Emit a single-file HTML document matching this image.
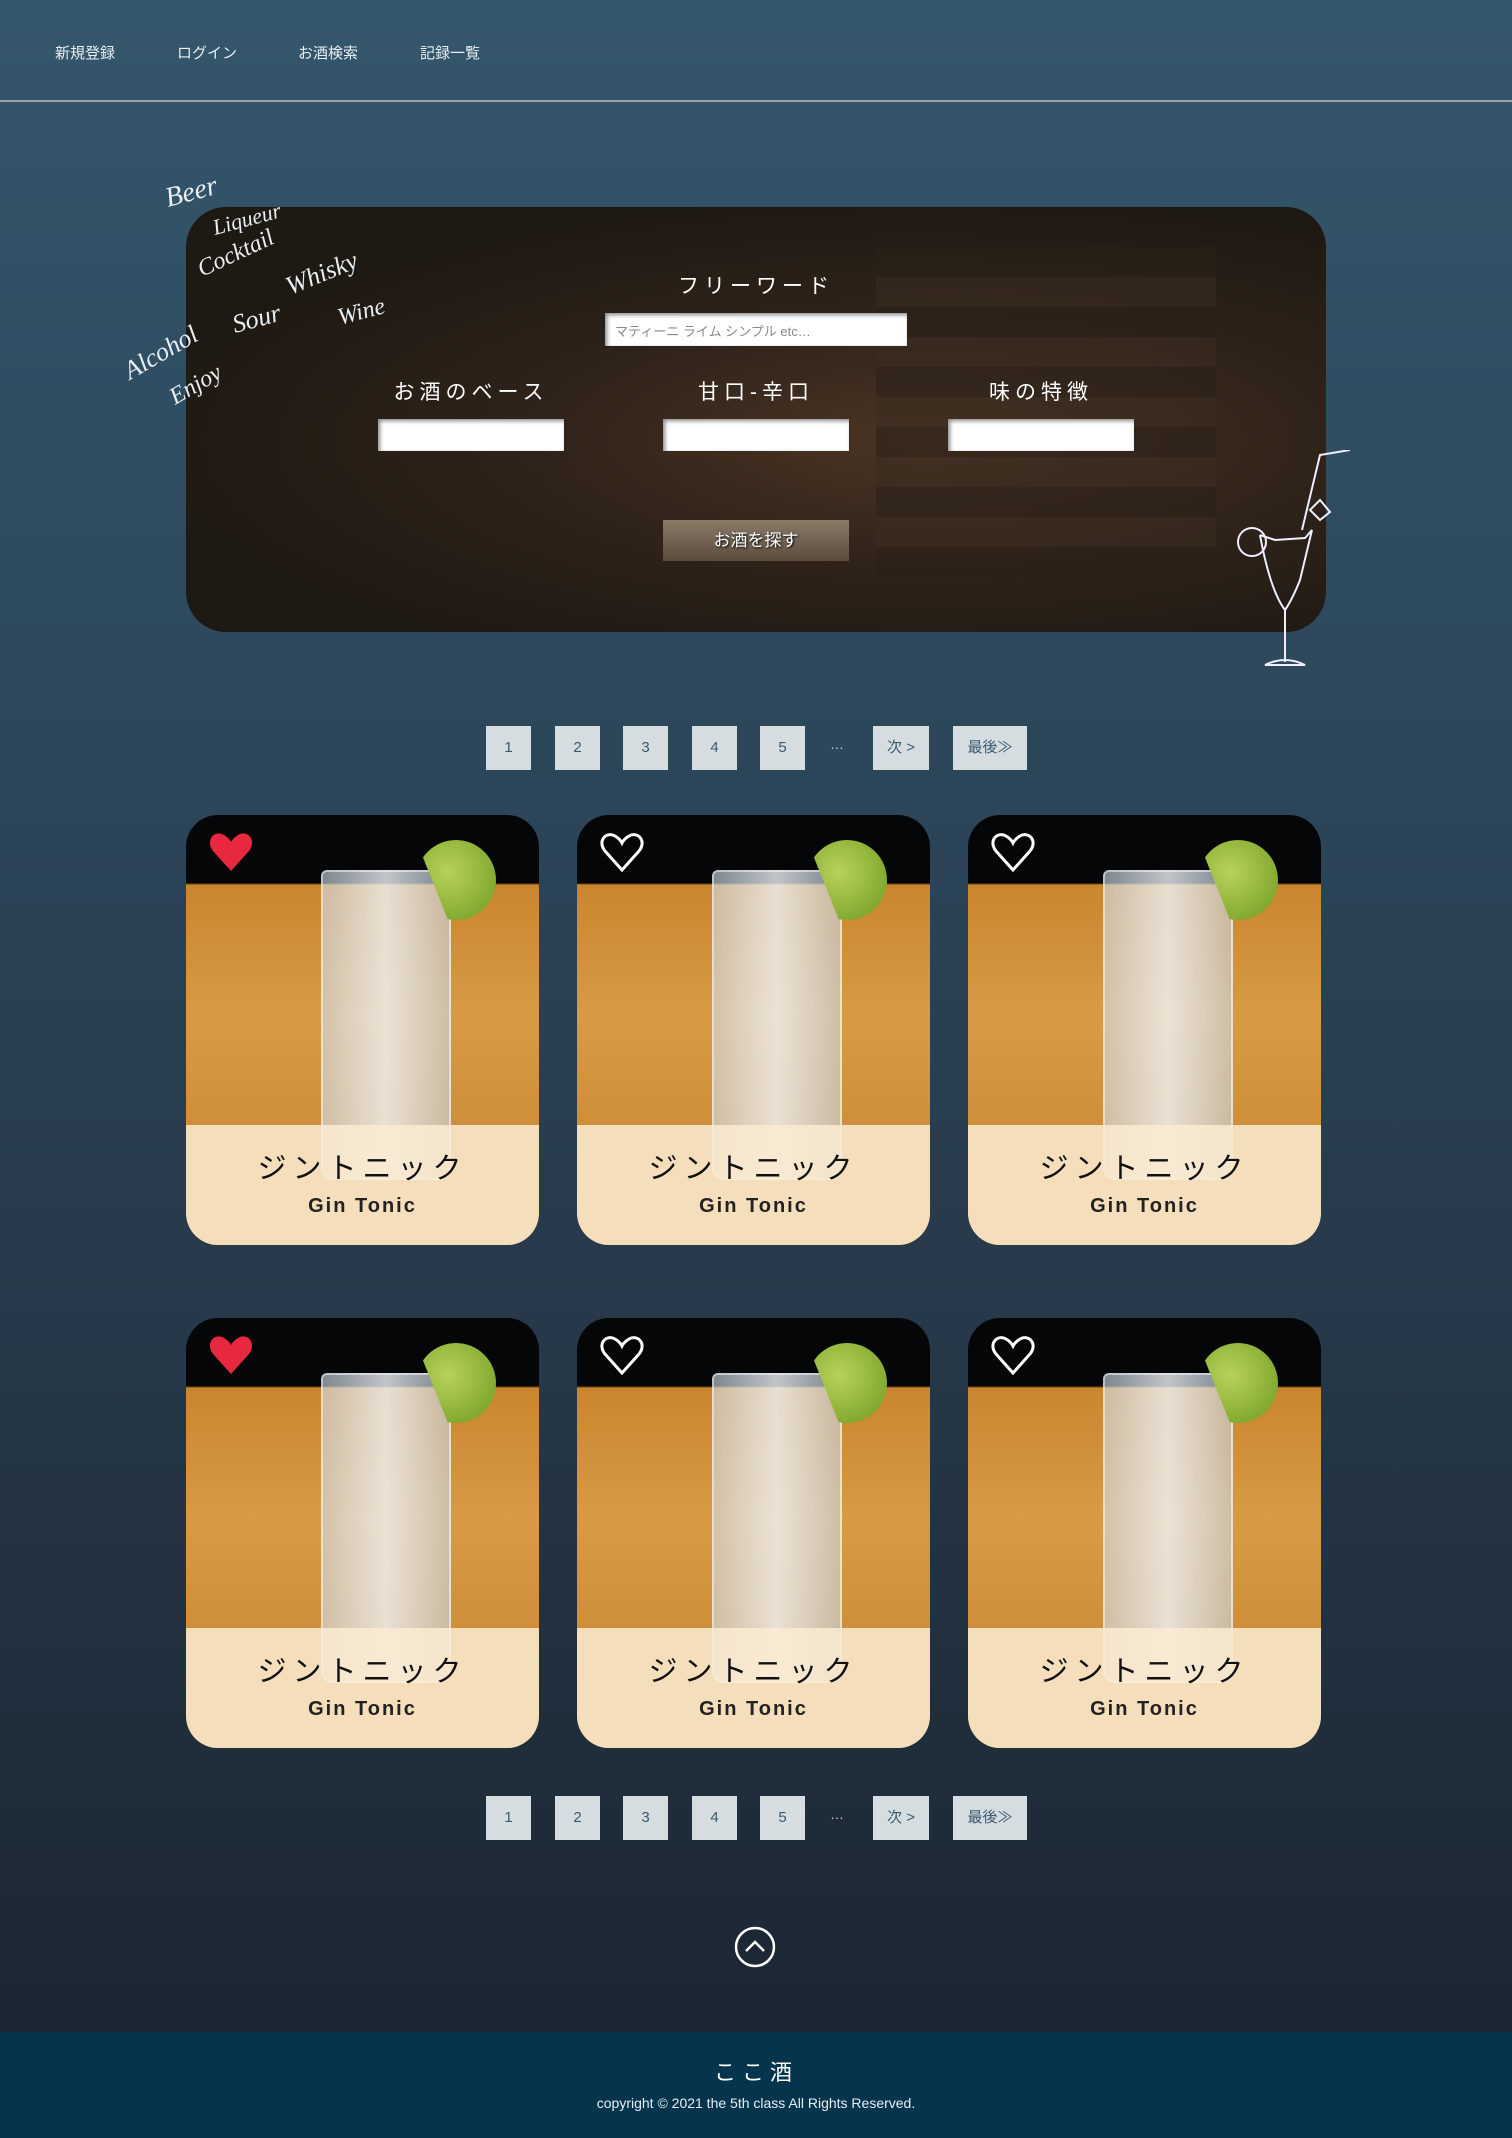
<!DOCTYPE html>
<html><head><meta charset="utf-8"><style>
*{margin:0;padding:0;box-sizing:border-box}
body{width:1512px;height:2138px;position:relative;overflow:hidden;font-family:"Liberation Sans","Noto Sans CJK JP",sans-serif;background:linear-gradient(#34566b 0,#2e4a5e 600px,#27394a 1300px,#1b2632 2032px);color:#fff}
.nav{position:absolute;top:42px;font-size:15px;color:#e8eef2}
.hr{position:absolute;top:100px;left:0;width:1512px;height:2px;background:#9aa6ae}
.hero{position:absolute;left:186px;top:207px;width:1140px;height:425px;border-radius:40px;overflow:hidden;background:radial-gradient(ellipse at 65% 55%,#4a3524 0,#2e2219 40%,#1e1912 75%);}
.hero .shelf{position:absolute;right:110px;top:40px;width:340px;height:330px;background:repeating-linear-gradient(#2a2018 0 30px,#3a2c20 30px 60px);opacity:.55}
.lbl{position:absolute;font-size:21px;letter-spacing:5px;color:#fff;text-align:center;width:240px}
.inp{position:absolute;background:#fff;box-shadow:inset 2px 2px 4px #888}
.btn{position:absolute;left:663px;top:520px;width:186px;height:41px;background:linear-gradient(#8a7a68,#5a4c3e);color:#fff;font-size:17px;text-align:center;line-height:41px;text-shadow:1px 1px 2px #000}
.pg{position:absolute;height:44px;background:#d6dde0;color:#3a5a70;font-size:15px;text-align:center;line-height:44px}
.card{position:absolute;width:353px;height:430px;border-radius:32px;overflow:hidden;background:linear-gradient(#050608 0,#050608 68px,#c9862e 70px,#d89a45 200px,#cf8f3a 310px)}
.glass{position:absolute;left:135px;top:55px;width:130px;height:310px;border-radius:6px 6px 12px 12px;border:2px solid rgba(255,255,255,.5);background:linear-gradient(90deg,rgba(210,222,235,.6),rgba(240,245,250,.8),rgba(200,215,230,.6))}
.lime{position:absolute;left:230px;top:25px;width:80px;height:80px;border-radius:50%;background:radial-gradient(circle at 40% 40%,#b8d25a,#6e9a20);clip-path:polygon(0 0,100% 0,100% 100%,40% 100%)}
.band{position:absolute;left:0;top:310px;width:100%;height:120px;background:rgba(250,236,210,.85)}
.jp{position:absolute;top:330px;width:100%;text-align:center;font-size:29px;letter-spacing:6px;color:#111}
.en{position:absolute;top:380px;width:100%;text-align:center;font-size:20px;font-weight:bold;letter-spacing:2px;color:#222}
.heart{position:absolute;left:22px;top:16px}
</style></head><body>
<div class="nav" style="left:55px">新規登録</div>
<div class="nav" style="left:177px">ログイン</div>
<div class="nav" style="left:298px">お酒検索</div>
<div class="nav" style="left:420px">記録一覧</div>
<div class="hr"></div>

<div class="hero"><div class="shelf"></div></div>
<svg style="position:absolute;left:120px;top:165px" width="300" height="250" font-family="Liberation Serif" font-style="italic" fill="none" stroke="none">
<text x="48" y="42" fill="#e8eef2" font-size="28" transform="rotate(-15 48 42)">Beer</text>
<text x="95" y="70" fill="#e8eef2" font-size="22" transform="rotate(-15 95 70)">Liqueur</text>
<text x="82" y="112" fill="#e8eef2" font-size="24" transform="rotate(-25 82 112)">Cocktail</text>
<text x="170" y="130" fill="#e8eef2" font-size="26" transform="rotate(-22 170 130)">Whisky</text>
<text x="115" y="168" fill="#e8eef2" font-size="26" transform="rotate(-15 115 168)">Sour</text>
<text x="220" y="160" fill="#e8eef2" font-size="24" transform="rotate(-15 220 160)">Wine</text>
<text x="10" y="215" fill="#e8eef2" font-size="26" transform="rotate(-30 10 215)">Alcohol</text>
<text x="55" y="240" fill="#e8eef2" font-size="24" transform="rotate(-30 55 240)">Enjoy</text>
</svg>
<div class="lbl" style="left:636px;top:270px">フリーワード</div>
<div class="inp" style="left:605px;top:313px;width:302px;height:33px;font-size:13px;color:#888;padding:8px 10px">マティーニ ライム シンプル etc…</div>
<div class="lbl" style="left:351px;top:376px">お酒のベース</div>
<div class="lbl" style="left:636px;top:376px">甘口-辛口</div>
<div class="lbl" style="left:921px;top:376px">味の特徴</div>
<div class="inp" style="left:378px;top:419px;width:186px;height:32px"></div>
<div class="inp" style="left:663px;top:419px;width:186px;height:32px"></div>
<div class="inp" style="left:948px;top:419px;width:186px;height:32px"></div>
<div class="btn">お酒を探す</div>
<svg style="position:absolute;left:1230px;top:450px" width="120" height="225" fill="none" stroke="#eef" stroke-width="2">
<path d="M30 85 L45 90 L75 88 L82 80 L70 130 Q62 150 55 160 L55 212 M35 215 Q55 205 75 215 Z"/>
<path d="M30 85 Q40 140 55 160"/><circle cx="22" cy="92" r="14"/><path d="M72 80 L90 5 L120 0"/><path d="M80 60 l10 -10 l10 12 l-10 8z"/>
</svg>

<div class="pg" style="left:486px;top:726px;width:45px">1</div>
<div class="pg" style="left:555px;top:726px;width:45px">2</div>
<div class="pg" style="left:623px;top:726px;width:45px">3</div>
<div class="pg" style="left:692px;top:726px;width:45px">4</div>
<div class="pg" style="left:760px;top:726px;width:45px">5</div>
<div style="position:absolute;left:830px;top:736px;font-size:14px;color:#ccd">…</div>
<div class="pg" style="left:873px;top:726px;width:56px">次 &gt;</div>
<div class="pg" style="left:953px;top:726px;width:74px">最後≫</div>

<div class="card" style="left:186px;top:815px"><div class="glass"></div><div class="lime"></div><div class="band"></div><div class="jp">ジントニック</div><div class="en">Gin Tonic</div><svg class="heart" width="46" height="42" viewBox="0 0 46 42"><path d="M23 40 L5 20 C-3 10 6 -2 16 4 Q21 7 23 11 Q25 7 30 4 C40 -2 49 10 41 20 Z" fill="#e8283e"/></svg></div>
<div class="card" style="left:577px;top:815px"><div class="glass"></div><div class="lime"></div><div class="band"></div><div class="jp">ジントニック</div><div class="en">Gin Tonic</div><svg class="heart" width="46" height="42" viewBox="0 0 46 42"><path d="M23 39 L6 20 C-2 10 7 0 16 5 Q21 8 23 12 Q25 8 30 5 C39 0 48 10 40 20 Z" fill="none" stroke="#fff" stroke-width="3"/></svg></div>
<div class="card" style="left:968px;top:815px"><div class="glass"></div><div class="lime"></div><div class="band"></div><div class="jp">ジントニック</div><div class="en">Gin Tonic</div><svg class="heart" width="46" height="42" viewBox="0 0 46 42"><path d="M23 39 L6 20 C-2 10 7 0 16 5 Q21 8 23 12 Q25 8 30 5 C39 0 48 10 40 20 Z" fill="none" stroke="#fff" stroke-width="3"/></svg></div>
<div class="card" style="left:186px;top:1318px"><div class="glass"></div><div class="lime"></div><div class="band"></div><div class="jp">ジントニック</div><div class="en">Gin Tonic</div><svg class="heart" width="46" height="42" viewBox="0 0 46 42"><path d="M23 40 L5 20 C-3 10 6 -2 16 4 Q21 7 23 11 Q25 7 30 4 C40 -2 49 10 41 20 Z" fill="#e8283e"/></svg></div>
<div class="card" style="left:577px;top:1318px"><div class="glass"></div><div class="lime"></div><div class="band"></div><div class="jp">ジントニック</div><div class="en">Gin Tonic</div><svg class="heart" width="46" height="42" viewBox="0 0 46 42"><path d="M23 39 L6 20 C-2 10 7 0 16 5 Q21 8 23 12 Q25 8 30 5 C39 0 48 10 40 20 Z" fill="none" stroke="#fff" stroke-width="3"/></svg></div>
<div class="card" style="left:968px;top:1318px"><div class="glass"></div><div class="lime"></div><div class="band"></div><div class="jp">ジントニック</div><div class="en">Gin Tonic</div><svg class="heart" width="46" height="42" viewBox="0 0 46 42"><path d="M23 39 L6 20 C-2 10 7 0 16 5 Q21 8 23 12 Q25 8 30 5 C39 0 48 10 40 20 Z" fill="none" stroke="#fff" stroke-width="3"/></svg></div>

<div class="pg" style="left:486px;top:1796px;width:45px">1</div>
<div class="pg" style="left:555px;top:1796px;width:45px">2</div>
<div class="pg" style="left:623px;top:1796px;width:45px">3</div>
<div class="pg" style="left:692px;top:1796px;width:45px">4</div>
<div class="pg" style="left:760px;top:1796px;width:45px">5</div>
<div style="position:absolute;left:830px;top:1806px;font-size:14px;color:#ccd">…</div>
<div class="pg" style="left:873px;top:1796px;width:56px">次 &gt;</div>
<div class="pg" style="left:953px;top:1796px;width:74px">最後≫</div>

<svg style="position:absolute;left:734px;top:1926px" width="42" height="42" fill="none" stroke="#fff" stroke-width="2.5"><circle cx="21" cy="21" r="19"/><path d="M12 25 L21 16 L30 25"/></svg>

<div style="position:absolute;left:0;top:2032px;width:1512px;height:106px;background:#05354c"></div>
<div style="position:absolute;left:0;top:2055px;width:1512px;text-align:center;font-size:22px;letter-spacing:6px">ここ酒</div>
<div style="position:absolute;left:0;top:2095px;width:1512px;text-align:center;font-size:14px;color:#e6eef2">copyright © 2021 the 5th class All Rights Reserved.</div>
</body></html>
